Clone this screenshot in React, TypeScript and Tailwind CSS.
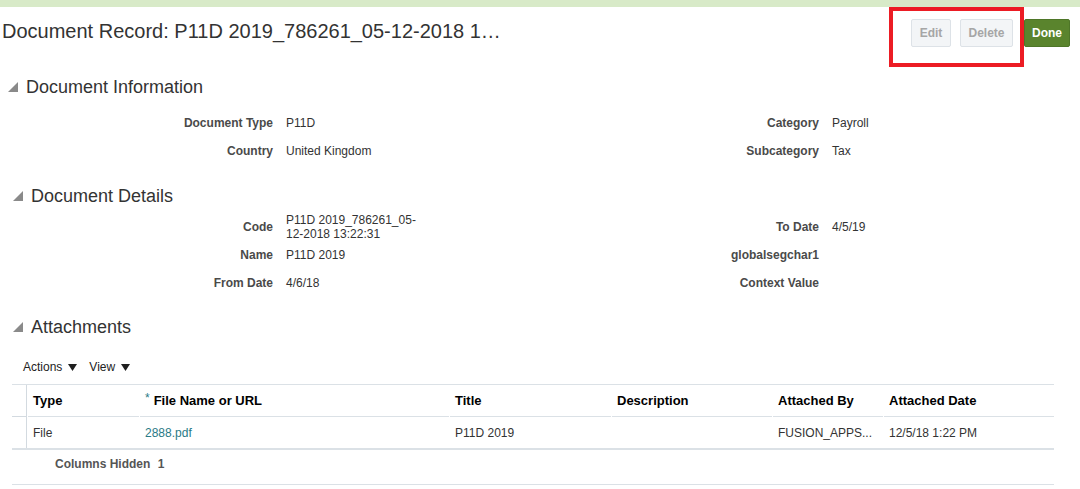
import React from 'react';

const SectionHeader = ({ title, indent }: { title: string; indent: string }) => (
  <div className={`flex items-center h-[22px] ${indent}`}>
    <svg width="10" height="10" viewBox="0 0 10 10" className="shrink-0">
      <polygon points="10,0 10,10 0,10" fill="#8a8a8a" />
    </svg>
    <span className="ml-[8px] text-[18px] leading-[22px] text-[#333333]">{title}</span>
  </div>
);

const FieldRow = ({
  label,
  value,
  rightLabel,
  rightValue,
}: {
  label: string;
  value: React.ReactNode;
  rightLabel?: string;
  rightValue?: string;
}) => (
  <div className="flex items-center h-[28px] text-[12px]">
    <div className="w-[273px] text-right font-bold text-[#4a4a4a]">{label}</div>
    <div className="ml-[13px] w-[140px] text-[#333333] leading-[14px]">{value}</div>
    <div className="w-[393px] text-right font-bold text-[#4a4a4a]">{rightLabel}</div>
    <div className="ml-[13px] text-[#333333]">{rightValue}</div>
  </div>
);

const Caret = () => (
  <svg width="9" height="7" viewBox="0 0 9 7" className="ml-[6px]">
    <polygon points="0,0 9,0 4.5,7" fill="#1f1f1f" />
  </svg>
);

const columns = [
  { key: 'type', label: 'Type', w: 'w-[111px]' },
  { key: 'file', label: 'File Name or URL', w: 'w-[309px]', required: true },
  { key: 'title', label: 'Title', w: 'w-[161px]' },
  { key: 'desc', label: 'Description', w: 'w-[160px]' },
  { key: 'by', label: 'Attached By', w: 'w-[110px]' },
  { key: 'date', label: 'Attached Date', w: 'w-[170px]' },
];

const row: Record<string, React.ReactNode> = {
  type: 'File',
  file: <span className="text-[#2a7a86]">2888.pdf</span>,
  title: 'P11D 2019',
  desc: '',
  by: 'FUSION_APPS...',
  date: '12/5/18 1:22 PM',
};

export default function App() {
  return (
    <div className="w-[1080px] h-[489px] bg-white overflow-hidden font-['Liberation_Sans',Arial,sans-serif]">
      <div className="h-[7px] bg-[#d8eac8]" />

      {/* Page header */}
      <div className="flex items-start h-[60px]">
        <h1 className="flex-1 pl-[2px] pt-[12px] text-[20px] leading-[24px] text-[#333333] font-normal">
          Document Record: P11D 2019_786261_05-12-2018 1…
        </h1>
        <div className="h-[60px] w-[135px] border-4 border-[#ec1c24] pl-[18px] pt-[8px] flex items-start gap-[9px]">
          <button className="h-[28px] w-[40px] rounded-[2px] border border-[#dde2e7] bg-[#f3f5f7] text-[12px] font-bold text-[#a6a6a6]">
            Edit
          </button>
          <button className="h-[28px] w-[53px] rounded-[2px] border border-[#dde2e7] bg-[#f3f5f7] text-[12px] font-bold text-[#a6a6a6]">
            Delete
          </button>
        </div>
        <button className="mt-[12px] mr-[10px] h-[28px] w-[46px] rounded-[2px] border border-[#4e7628] bg-[#5a842d] text-[12px] font-bold text-white">
          Done
        </button>
      </div>

      {/* Document Information */}
      <div className="mt-[9px]">
        <SectionHeader title="Document Information" indent="pl-[8px]" />
      </div>
      <div className="mt-[11px]">
        <FieldRow label="Document Type" value="P11D" rightLabel="Category" rightValue="Payroll" />
        <FieldRow label="Country" value="United Kingdom" rightLabel="Subcategory" rightValue="Tax" />
      </div>

      {/* Document Details */}
      <div className="mt-[20px]">
        <SectionHeader title="Document Details" indent="pl-[13px]" />
      </div>
      <div className="mt-[6px]">
        <FieldRow label="Code" value="P11D 2019_786261_05-12-2018 13:22:31" rightLabel="To Date" rightValue="4/5/19" />
        <FieldRow label="Name" value="P11D 2019" rightLabel="globalsegchar1" />
        <FieldRow label="From Date" value="4/6/18" rightLabel="Context Value" />
      </div>

      {/* Attachments */}
      <div className="mt-[19px]">
        <SectionHeader title="Attachments" indent="pl-[13px]" />
      </div>
      <div className="mt-[19px] h-[20px] flex items-center pl-[23px] text-[12px] text-[#222222]">
        <span>Actions</span>
        <Caret />
        <span className="ml-[12px]">View</span>
        <Caret />
      </div>

      <div className="mt-[7px] ml-[12px] w-[1042px]">
        {/* header row */}
        <div className="flex gap-px border-t border-[#dbe1e6]">
          <div className="w-[15px] h-[32px] border-r border-b border-[#d3dae0]" />
          {columns.map((c) => (
            <div
              key={c.key}
              className={`${c.w} h-[32px] border-b border-[#dbe1e6] flex items-center pl-[5px] text-[13px] font-bold text-black`}
            >
              {c.required && <span className="text-[#2a7a86] font-normal text-[12px] mr-[4px] -mt-[6px]">*</span>}
              {c.label}
            </div>
          ))}
        </div>
        {/* data row */}
        <div className="flex gap-px border-b-2 border-[#dbe1e6]">
          <div className="w-[15px] h-[31px] border-r border-[#d3dae0]" />
          {columns.map((c) => (
            <div key={c.key} className={`${c.w} h-[31px] flex items-center pl-[5px] text-[12px] text-[#333333] whitespace-nowrap`}>
              {row[c.key]}
            </div>
          ))}
        </div>
        <div className="h-[35px] border-b border-[#dbe1e6] pt-[6px] pl-[43px] text-[12px] leading-[16px] font-bold text-[#555555]">
          Columns Hidden <span className="ml-[4px]">1</span>
        </div>
      </div>
    </div>
  );
}
